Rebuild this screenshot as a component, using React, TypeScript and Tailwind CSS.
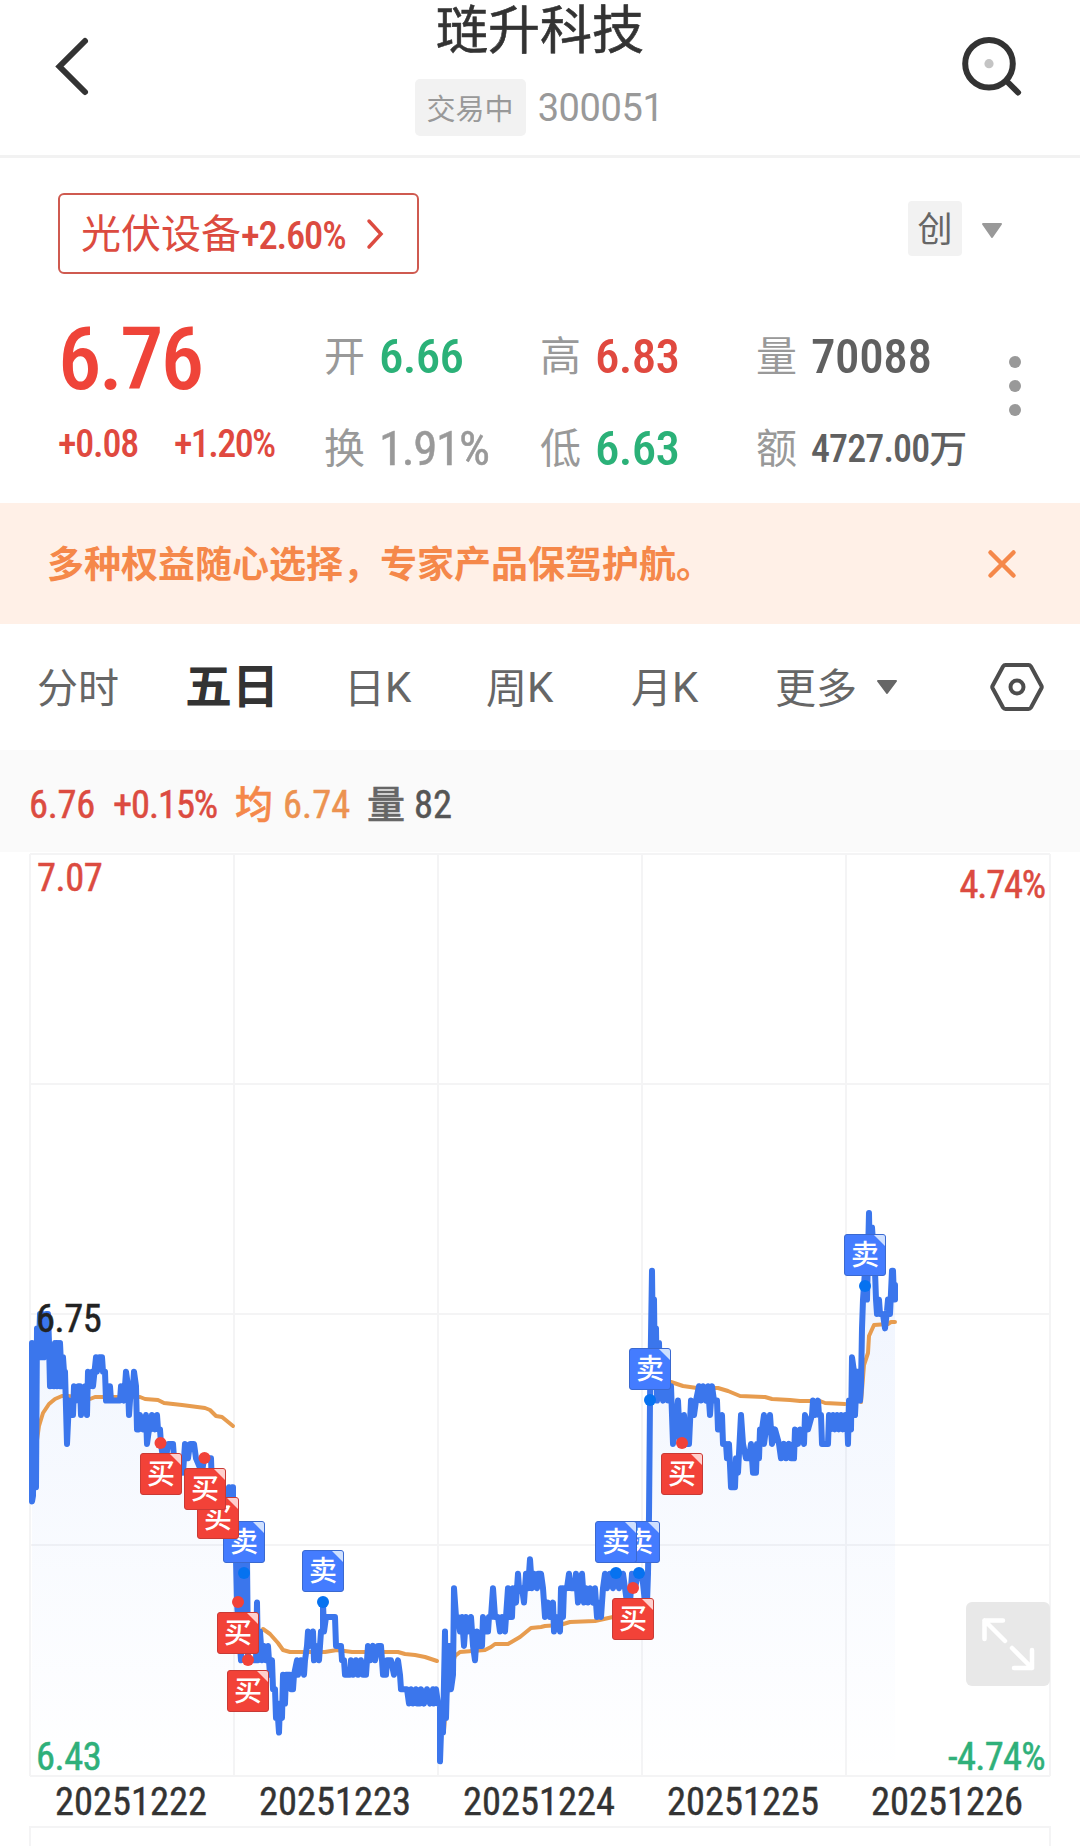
import clsx from "clsx";

type Side = "buy" | "sell";

interface Trade {
  side: Side;
  x: number;
  y: number;
  dot?: [number, number];
}

interface Quote {
  label: string;
  value: string;
  className: string;
}

const NUM = "font-['Roboto_Condensed','Noto_Sans_CJK_SC',sans-serif]";
const CJK = "font-['Noto_Sans_CJK_SC',sans-serif]";

// chart canvas: origin is the top left corner of the plot section
const CHART_TOP = 852;
const CHART_LEFT = 30;
const CHART_RIGHT = 1050;
const BASE_Y = 1314; // y of 6.75
const TICK = 14.43; // pixels per 0.01

// [x, ticks below 6.75]
const prices: [number, number][] = [
  [32, 2], [32, 13], [33, 12.6], [34, 3], [36, 12], [37, 1], [39, 2], [40, 0], [41, 3], [42, 0], [44, 3], [45, 1], [46, 0],
  [48, 0], [49, 2], [50, 5], [52, 3], [54, 5], [55, 2], [57, 5], [58, 2], [60, 5], [60, 2], [62, 5], [63, 3], [64, 4], [65, 4],
  [67, 9], [69, 6], [71, 7], [73, 7], [74, 5], [76, 6], [78, 5], [80, 5], [81, 7], [83, 6], [85, 5], [87, 7], [88, 4], [90, 5],
  [92, 4], [93, 5], [96, 3], [97, 4], [99, 3], [102, 3], [103, 4], [105, 4], [106, 6], [109, 6], [110, 5], [111, 6], [120, 6],
  [121, 5], [124, 6], [126, 4], [128, 5], [129, 7], [131, 5], [133, 5], [134, 4], [136, 5], [137, 8], [139, 8], [140, 7],
  [143, 8], [146, 7], [147, 9], [149, 8], [151, 8], [152, 7], [155, 8], [157, 7], [158, 8], [160, 8], [161, 9], [163, 10],
  [166, 10], [168, 9], [173, 9], [174, 10], [178, 10], [183, 11], [185, 9], [188, 10], [190, 9], [194, 9], [196, 10],
  [202, 11], [204, 10], [211, 10], [212, 12], [218, 13], [226, 13], [229, 12], [230, 14], [232, 12], [233, 12], [233, 15],
  [236, 15], [236, 17], [237, 20], [241, 24], [242, 17], [244, 22], [247, 17], [248, 24], [252, 24], [256, 24], [257, 20],
  [258, 24], [260, 22], [262, 24], [264, 23], [266, 24], [268, 23], [270, 25], [272, 24], [273, 26], [275, 26], [276, 28],
  [278, 28], [279, 29], [280, 27], [282, 28], [283, 25], [285, 27], [286, 25], [290, 25], [291, 26], [293, 26], [294, 25],
  [297, 24], [298, 25], [301, 24], [304, 25], [305, 24], [307, 23], [308, 22], [310, 23], [313, 22], [314, 24], [316, 23],
  [319, 24], [321, 22], [323, 22], [323, 20], [324, 22], [326, 21], [335, 21], [336, 23], [341, 23], [342, 24], [344, 24],
  [345, 25], [350, 25], [351, 24], [353, 25], [356, 24], [358, 25], [361, 24], [363, 25], [366, 25], [368, 23], [370, 24],
  [373, 23], [375, 24], [378, 23], [381, 23], [383, 25], [386, 25], [387, 24], [391, 24], [394, 25], [398, 24], [400, 25],
  [401, 26], [407, 26], [409, 27], [411, 26], [413, 27], [416, 26], [417, 27], [420, 27], [421, 26], [424, 27], [427, 26],
  [430, 27], [433, 26], [434, 27], [436, 26], [438, 27], [440, 27], [440, 31], [442, 27], [443, 29], [445, 22], [446, 28],
  [448, 23], [450, 23], [451, 26], [453, 25], [454, 19], [456, 21], [458, 21], [460, 22], [462, 21], [464, 23], [466, 21],
  [468, 22], [471, 21], [473, 23], [475, 24], [477, 22], [479, 23], [482, 23], [483, 21], [486, 22], [488, 22], [489, 21],
  [491, 21], [493, 19], [495, 21], [498, 21], [500, 22], [502, 21], [505, 22], [508, 19], [509, 21], [512, 21], [513, 19],
  [516, 20], [518, 18], [519, 19], [522, 19], [524, 20], [526, 18], [528, 19], [530, 17], [532, 19], [534, 18], [537, 19],
  [538, 18], [541, 18], [543, 19], [544, 20], [545, 21], [548, 20], [550, 21], [553, 20], [554, 22], [556, 21], [560, 22],
  [561, 19], [563, 21], [564, 19], [567, 19], [569, 18], [571, 19], [575, 19], [576, 18], [578, 20], [580, 19], [582, 18],
  [584, 20], [586, 19], [588, 20], [590, 19], [593, 20], [595, 19], [597, 21], [598, 20], [601, 21], [603, 19], [605, 18],
  [607, 19], [610, 18], [613, 19], [616, 18], [619, 19], [623, 18], [625, 19], [627, 20], [630, 20], [632, 18], [635, 19],
  [638, 18], [642, 18], [645, 20], [647, 20], [648, 18], [649, 14], [650, 6], [652, -3], [653, 3], [654, -1], [655, 5],
  [656, 1], [657, 6], [659, 2], [660, 5], [663, 6], [665, 5], [668, 6], [670, 6], [671, 5], [673, 9], [675, 8], [678, 6],
  [680, 9], [684, 7], [686, 9], [689, 9], [691, 6], [694, 7], [696, 6], [699, 5], [701, 6], [703, 5], [706, 6], [708, 5],
  [710, 7], [712, 5], [714, 6], [717, 6], [718, 8], [720, 8], [722, 7], [723, 9], [726, 9], [727, 10], [729, 9], [731, 12],
  [735, 12], [736, 10], [738, 11], [741, 7], [743, 9], [746, 10], [749, 10], [751, 9], [753, 11], [756, 11], [757, 9],
  [759, 10], [760, 8], [762, 8], [764, 7], [764, 9], [766, 8], [769, 8], [770, 7], [772, 9], [775, 8], [779, 9], [781, 10],
  [784, 9], [786, 10], [789, 9], [791, 10], [794, 10], [795, 8], [798, 9], [800, 8], [804, 9], [805, 7], [808, 8], [812, 7],
  [813, 6], [815, 7], [818, 6], [819, 7], [821, 7], [822, 9], [828, 9], [829, 7], [831, 8], [833, 7], [835, 8], [837, 7],
  [839, 8], [841, 7], [843, 8], [845, 7], [847, 7], [848, 9], [849, 6], [851, 8], [852, 3], [854, 4], [855, 7], [857, 4],
  [859, 4], [860, 6], [861, 5], [862, 1], [863, -1], [865, -3], [867, -1], [869, -7], [870, -3], [872, -6], [875, -3],
  [876, -1], [877, 0], [879, -1], [880, 0], [883, 0], [885, 1], [887, -0.2], [888, -1], [890, 0], [892, -3], [893, -3],
  [894, -1], [895, -2], [895, -1],
];

// average price, one polyline per day
const averages = [
  "37,1440 39,1426 43,1413 49,1404 55,1399 62,1396 68,1396 90,1399 95,1397 140,1397 145,1399 158,1400 164,1403 182,1405 205,1408 210,1410 216,1416 222,1417 233,1426",
  "263,1629 270,1634 278,1643 283,1650 290,1652 325,1652 337,1650 352,1652 398,1652 405,1654 415,1655 425,1657 437,1661",
  "444,1730 447,1695 451,1668 455,1656 460,1652 485,1650 491,1647 495,1644 508,1644 520,1637 531,1628 541,1627 545,1626 560,1625 570,1622 595,1621 613,1617 640,1615",
  "660,1380 671,1382 683,1386 697,1388 718,1388 728,1391 740,1396 765,1397 772,1399 790,1400 800,1401 820,1401 825,1403 845,1404",
  "861,1402 864,1365 868,1353 869,1336 874,1325 888,1324 891,1322 895,1322",
];

const trades: Trade[] = [
  { side: "sell", x: 223, y: 1521, dot: [244, 1573] },
  { side: "buy", x: 197, y: 1497 },
  { side: "buy", x: 184, y: 1468, dot: [204.5, 1458] },
  { side: "buy", x: 140, y: 1453, dot: [160.5, 1443] },
  { side: "buy", x: 217, y: 1612, dot: [238, 1602] },
  { side: "buy", x: 227, y: 1670, dot: [248, 1660] },
  { side: "sell", x: 302, y: 1550, dot: [323, 1602] },
  { side: "sell", x: 618, y: 1521, dot: [639, 1573] },
  { side: "sell", x: 595, y: 1521, dot: [616, 1573] },
  { side: "buy", x: 612, y: 1598, dot: [633, 1588] },
  { side: "sell", x: 629, y: 1348, dot: [650, 1400] },
  { side: "buy", x: 661, y: 1453, dot: [682, 1443] },
  { side: "sell", x: 844, y: 1234, dot: [865, 1286] },
];

const days = ["20251222", "20251223", "20251224", "20251225", "20251226"];

const line = prices.map(([x, n]) => `${x},${(BASE_Y + n * TICK).toFixed(1)}`).join(" ");

function Header() {
  return (
    <header className="flex h-[158px] items-start justify-between border-b-[3px] border-[#f2f2f2] pl-[54px] pr-[56px]">
      <svg className="mt-9 h-[62px] w-9" viewBox="0 0 36 62" fill="none">
        <path d="M31 5 5.5 30.5 31 56" stroke="#333" strokeWidth="6" strokeLinecap="round" />
      </svg>
      <div className="flex flex-col items-center">
        <h1 className={clsx(CJK, "h-[79px] pl-[34px] text-[52px] leading-[54px] text-[#333] [-webkit-text-stroke:0.6px_#333]")}>琏升科技</h1>
        <div className="flex h-[57px] items-center pl-[32px]">
          <span className={clsx(CJK, "h-[57px] w-[111px] rounded-[5px] bg-[#f2f2f2] text-center text-[29px] leading-[56px] text-[#999]")}>
            交易中
          </span>
          <span className="ml-[12px] pt-[2px] font-['Roboto',sans-serif] text-[38px] leading-[57px] tracking-[-0.4px] text-[#999]">300051</span>
        </div>
      </div>
      <svg className="mt-8 h-[68px] w-[68px]" viewBox="0 0 68 68" fill="none">
        <circle cx="33" cy="31.7" r="23.8" stroke="#333" strokeWidth="6" />
        <circle cx="33" cy="31.7" r="4.6" fill="#c4c4c4" />
        <path d="M51 49.5 62 60.5" stroke="#333" strokeWidth="6" strokeLinecap="round" />
      </svg>
    </header>
  );
}

function SectorRow() {
  return (
    <div className="flex h-[138px] items-start justify-between pl-[58px] pr-[77px] pt-[35px]">
      <button className="flex h-[81px] w-[361px] items-center rounded-[6px] border-2 border-[#cf5a50] pl-[21px] text-[#dc4b40]">
        <span className={clsx(CJK, "-mt-1 text-[40px] leading-[77px]")}>光伏设备</span>
        <span className={clsx(NUM, "pt-1 text-[38.5px] font-medium leading-[73px] tracking-[-1.2px]")}>+2.60%</span>
        <svg className="ml-[21px] h-[32px] w-[20px]" viewBox="0 0 20 32" fill="none">
          <path d="M3 3 15 16 3 29" stroke="currentColor" strokeWidth="3.500" strokeLinecap="round" />
        </svg>
      </button>
      <div className="flex items-center pt-2">
        <span className={clsx(CJK, "h-[55px] w-[54px] rounded-[4px] bg-[#f2f2f2] text-center text-[35px] leading-[52px] text-[#666]")}>
          创
        </span>
        <svg className="ml-[19px] mt-[5px] h-4 w-[22px]" viewBox="0 0 22 16">
          <path d="M2 1H20L11 14Z" fill="#999" stroke="#999" strokeWidth="2" strokeLinejoin="round" />
        </svg>
      </div>
    </div>
  );
}

const topQuotes: Quote[] = [
  { label: "开", value: "6.66", className: "text-[49px] font-medium tracking-[-0.7px] text-[#2bb178]" },
  { label: "高", value: "6.83", className: "text-[49px] font-medium tracking-[-0.7px] text-[#e0493f]" },
  { label: "量", value: "70088", className: "text-[49px] font-medium tracking-[-0.4px] text-[#606060]" },
];

const bottomQuotes: Quote[] = [
  { label: "换", value: "1.91%", className: "text-[49px] tracking-[-1.4px] text-[#999] [-webkit-text-stroke:0.5px_#999]" },
  { label: "低", value: "6.63", className: "text-[49px] font-medium tracking-[-0.7px] text-[#2bb178]" },
  { label: "额", value: "4727.00万", className: "text-[38px] font-medium tracking-[-0.9px] text-[#606060]" },
];

function QuoteRow({ items }: { items: Quote[] }) {
  return (
    <div className="flex h-[92px]">
      {items.map((q) => (
        <div key={q.label} className="flex h-[68px] w-[216px] items-center whitespace-nowrap">
          <span className={clsx(CJK, "-mt-[7px] w-[55px] text-[41px] leading-[68px] text-[#999]")}>{q.label}</span>
          <span className={clsx(NUM, "pt-px leading-[68px]", q.className)}>{q.value}</span>
        </div>
      ))}
    </div>
  );
}

function Quotes() {
  return (
    <section className="flex h-[207px] pl-[58px]">
      <div className="w-[266px] text-[#e0493f]">
        <div className={clsx(NUM, "h-[124px] text-[87px] font-medium leading-[127px] tracking-[-2.8px] text-[#ef4439]")}>6.76</div>
        <div className={clsx(NUM, "flex gap-[36px] pt-px text-[38px] font-medium leading-[46px] tracking-[-1.2px]")}>
          <span>+0.08</span>
          <span className="tracking-[-1.6px]">+1.20%</span>
        </div>
      </div>
      <div className="w-[680px] pt-[26px]">
        <QuoteRow items={topQuotes} />
        <QuoteRow items={bottomQuotes} />
      </div>
      <div className="flex flex-col gap-3 pl-[5px] pt-[60px]">
        <i className="size-3 rounded-full bg-[#999]" />
        <i className="size-3 rounded-full bg-[#999]" />
        <i className="size-3 rounded-full bg-[#999]" />
      </div>
    </section>
  );
}

function Banner() {
  return (
    <div className="flex h-[121px] items-center justify-between bg-[#fff0e7] pl-[47px] pr-[62px]">
      <p className={clsx(CJK, "-mt-[3px] text-[37px] font-bold leading-[60px] text-[#f5884a]")}>
        多种权益随心选择，专家产品保驾护航。
      </p>
      <svg className="h-8 w-8" viewBox="0 0 32 32" fill="none">
        <path d="M4.500 4.500 27.500 27.500M27.500 4.500 4.500 27.500" stroke="#f5884a" strokeWidth="4.500" strokeLinecap="round" />
      </svg>
    </div>
  );
}

function Tabs() {
  return (
    <nav className={clsx(CJK, "flex h-[126px] items-center pl-[37px] text-[41px] leading-[80px] text-[#666]")}>
      <span className="-mt-[5px] w-[148px]">分时</span>
      <span className="-mt-[8px] w-[159px] text-[47px] font-bold text-[#333]">五日</span>
      <Tab char="日" className="w-[142px]" />
      <Tab char="周" className="w-[145px]" />
      <Tab char="月" className="w-[144px]" />
      <span className="-mt-[5px] w-[101px]">更多</span>
      <svg className="h-4 w-[22px]" viewBox="0 0 22 16">
        <path d="M2 2H20L11 14Z" fill="#666" stroke="#666" strokeWidth="2" strokeLinejoin="round" />
      </svg>
      <svg className="ml-[90px] h-[52px] w-[58px]" viewBox="0 0 58 52" fill="none" stroke="#4d4d4d" strokeWidth="4">
        <path d="M17.500 4H40.500Q42 4 43 5.500L53.500 25Q54 26 53.500 27L43 46.500Q42 48 40.500 48H17.500Q16 48 15 46.500L4.500 27Q4 26 4.500 25L15 5.500Q16 4 17.500 4Z" />
        <circle cx="29" cy="26" r="6.500" />
      </svg>
    </nav>
  );
}

function Tab({ char, className }: { char: string; className: string }) {
  return (
    <span className={clsx("-mt-[5px] flex shrink-0 items-center", className)}>
      {char}
      <span className="mt-[6px] font-['Roboto',sans-serif] text-[42px]">K</span>
    </span>
  );
}

function InfoBar() {
  return (
    <div className={clsx(NUM, "flex h-[102px] items-center bg-[#fafafa] pl-[29px] pt-[7px] text-[38.5px] leading-[60px] [-webkit-text-stroke:0.5px_currentColor]")}>
      <span className="w-[84px] tracking-[-0.3px] text-[#dc4b40]">6.76</span>
      <span className="w-[122px] tracking-[-1.1px] text-[#dc4b40]">+0.15%</span>
      <span className={clsx(CJK, "-mt-[6px] w-[48px] text-[38px] font-medium text-[#f5884a]")}>均</span>
      <span className="w-[84px] text-[#ec9250]">6.74</span>
      <span className={clsx(CJK, "-mt-[6px] w-[47px] text-[38px] font-medium text-[#666]")}>量</span>
      <span className="text-[#555]">82</span>
    </div>
  );
}

function TradeFlag({ trade }: { trade: Trade }) {
  const buy = trade.side === "buy";
  return (
    <div
      className={clsx(
        CJK,
        "absolute h-[42px] w-[42px] overflow-hidden rounded-[3px] border text-center text-[28px] font-medium leading-[37px] text-white",
        buy ? "border-[#c93a35] bg-[#f24238]" : "border-[#3a69d0] bg-[#447cff]",
      )}
      style={{ left: trade.x, top: trade.y - CHART_TOP }}
    >
      {buy ? "买" : "卖"}
      <i
        className={clsx(
          "absolute right-0 top-0 h-[11px] w-[11px] [clip-path:polygon(0_0,100%_0,100%_100%)]",
          buy ? "bg-[#ffd0cd]" : "bg-[#cfe0ff]",
        )}
      />
    </div>
  );
}

function Chart() {
  return (
    <section className="relative h-[926px]">
      <svg className="block h-[926px] w-full" viewBox={`0 ${CHART_TOP} 1080 926`} fill="none">
        <defs>
          <linearGradient id="area" x1="0" y1="1314" x2="0" y2="1776" gradientUnits="userSpaceOnUse">
            <stop offset="0" stopColor="#3d7cf5" stopOpacity="0.07" />
            <stop offset="1" stopColor="#3d7cf5" stopOpacity="0" />
          </linearGradient>
        </defs>
        <g stroke="#f4f4f5" strokeWidth="2">
          {[854, 1084, 1314, 1545, 1776].map((y) => (
            <path key={y} d={`M${CHART_LEFT} ${y}H${CHART_RIGHT}`} />
          ))}
          {[30, 234, 438, 642, 846, 1050].map((x) => (
            <path key={x} d={`M${x} 854V1776`} />
          ))}
        </g>
        <polygon points={`32,1776 ${line} 895,1776`} fill="url(#area)" />
        {averages.map((points) => (
          <polyline key={points} points={points} stroke="#e79c4f" strokeWidth="4" strokeLinejoin="round" strokeLinecap="round" />
        ))}
        <polyline points={line} stroke="#3b76ec" strokeWidth="6" strokeLinejoin="round" strokeLinecap="round" />
        {trades.map(
          (t) =>
            t.dot && (
              <circle key={`${t.x}-${t.y}`} cx={t.dot[0]} cy={t.dot[1]} r="6" fill={t.side === "buy" ? "#f24238" : "#0672f0"} />
            ),
        )}
      </svg>
      {trades.map((t) => (
        <TradeFlag key={`${t.x}-${t.y}`} trade={t} />
      ))}
      <div className={clsx(NUM, "text-[38.5px] leading-[40px] tracking-[-0.5px] [-webkit-text-stroke:0.5px_currentColor]")}>
        <span className="absolute left-[37px] top-[6px] text-[#dc4b40]">7.07</span>
        <span className="absolute right-[35px] top-[13px] tracking-[-1.2px] text-[#dc4b40]">4.74%</span>
        <span className="absolute left-[36px] top-[447px] text-[#222]">6.75</span>
        <span className="absolute left-[36px] top-[885px] text-[#2fb07a]">6.43</span>
        <span className="absolute right-[35px] top-[885px] tracking-[-0.7px] text-[#2fb07a]">-4.74%</span>
      </div>
      <button className="absolute left-[966px] top-[750px] h-[84px] w-[84px] rounded-[6px] bg-[#e8e8e8]">
        <svg viewBox="0 0 84 84" fill="none" stroke="#fff" strokeWidth="4.500" strokeLinecap="round" strokeLinejoin="round">
          <path d="M37 18.500H18.500V37M18.500 18.500 39 39M46 46 66 66M48 66H66V48" />
        </svg>
      </button>
    </section>
  );
}

export default function App() {
  return (
    <div className="h-[1846px] w-[1080px] overflow-hidden bg-white">
      <Header />
      <SectorRow />
      <Quotes />
      <Banner />
      <Tabs />
      <InfoBar />
      <Chart />
      <div className={clsx(NUM, "ml-[29px] mr-[31px] flex h-[48px] text-[38.5px] leading-[48px] text-[#333] [-webkit-text-stroke:0.4px_#333]")}>
        {days.map((d) => (
          <span key={d} className="flex-1 text-center">
            {d}
          </span>
        ))}
      </div>
      <div className="mx-[29px] h-[20px] overflow-hidden border-x-2 border-t-2 border-[#f4f4f5]">
        <div className={clsx(CJK, "pl-[22px] pt-[9px] text-[32px] leading-[48px] text-[#555]")}>成交量</div>
      </div>
    </div>
  );
}
